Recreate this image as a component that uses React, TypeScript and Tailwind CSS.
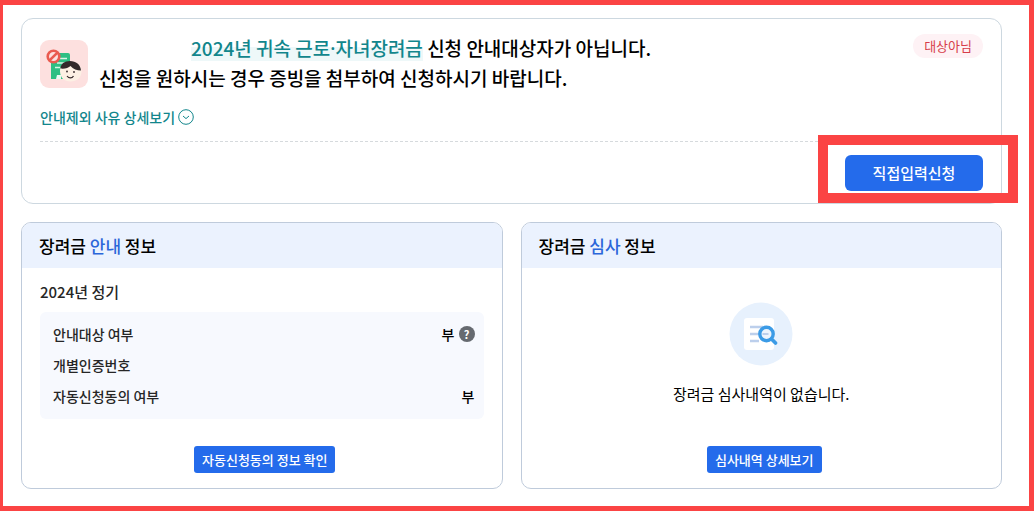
import type { ReactNode } from "react"

function NotEligibleIcon() {
  return (
    <svg className="size-12 shrink-0" viewBox="0 0 48 48" aria-hidden="true">
      <rect width="48" height="48" rx="9" fill="#fde0df" />
      <path d="M13 13h15a2 2 0 0 1 2 2v24H11V15a2 2 0 0 1 2-2z" fill="#2ebf83" />
      <path d="M20 18.500h7M17 23h8M15 27.500h5" stroke="#d8f5e6" strokeWidth="1.600" />
      <path d="M16 39l1-4h4v4z" fill="#e9fbf2" />
      <path d="M20 31c0-6 4-9 10-9s11.500 3 11.500 9c0 7-5 10.500-11 10.500S20 38 20 31z" fill="#fdf0e4" />
      <path d="M20.500 28.500c0-4.500 4-7.500 9.500-7.500 6 0 10.500 3.500 11 9.500-4 0-8-1.500-10.500-4.500-2 2-6 3-10 2.500z" fill="#33282a" />
      <circle cx="27" cy="31.500" r="0.900" fill="#33282a" />
      <circle cx="34" cy="32" r="0.900" fill="#33282a" />
      <path d="M27 36c2 2.600 5 2.600 6.500 0" fill="none" stroke="#33282a" strokeWidth="1.200" />
      <circle cx="13.500" cy="16.500" r="5.800" fill="#fde0df" stroke="#ea5b50" strokeWidth="2.600" />
      <path d="M9.800 20.200l7.400-7.400" stroke="#ea5b50" strokeWidth="2.600" />
    </svg>
  )
}

function EmptyIcon() {
  return (
    <svg className="size-16" viewBox="0 0 64 64" aria-hidden="true">
      <circle cx="32" cy="32" r="31.500" fill="#e7f1fd" />
      <rect x="15" y="16" width="30" height="32" rx="3" fill="#ffffff" />
      <path d="M21 25h13M21 32h10M21 39h9" stroke="#bccfec" strokeWidth="2.400" />
      <circle cx="37.500" cy="32" r="6.700" fill="#edf4fd" stroke="#3b9be6" strokeWidth="3.400" />
      <path d="M33.500 32h6" stroke="#bccfec" strokeWidth="2" />
      <path d="M42.500 37l4 4" stroke="#3b9be6" strokeWidth="3.800" strokeLinecap="round" />
    </svg>
  )
}

function ChevronCircle() {
  return (
    <svg className="size-4" viewBox="0 0 16 16" fill="none" stroke="currentColor" aria-hidden="true">
      <circle cx="8" cy="8" r="7.300" />
      <path d="M5 7l3 2.600L11 7" />
    </svg>
  )
}

function Panel({ keyword, children }: { keyword: string; children: ReactNode }) {
  return (
    <section className="flex flex-1 flex-col overflow-hidden rounded-[10px] border border-[#bfcbdb]">
      <h2 className="bg-[#ebf2fe] px-[17px] py-[10px] text-[17px] leading-[25px] font-medium">
        장려금 <span className="text-[#2b66d9]">{keyword}</span> 정보
      </h2>
      {children}
    </section>
  )
}

function SmallButton({ children }: { children: ReactNode }) {
  return (
    <button type="button" className="h-[27px] rounded-[3px] bg-[#246beb] px-2 text-[13px] font-medium text-white">
      {children}
    </button>
  )
}

function InfoRow({ label, children }: { label: string; children?: ReactNode }) {
  return (
    <div className="flex items-center justify-between">
      <dt className="text-[#262626]">{label}</dt>
      <dd className="flex items-center gap-1">{children}</dd>
    </div>
  )
}

export default function App() {
  return (
    <main className="flex min-h-screen flex-col gap-[18px] border-5 border-l-3 border-[#fb4444] bg-white pt-[13px] pr-[27px] pb-[17px] pl-[18px] font-['Noto_Sans_CJK_KR','Noto_Sans',sans-serif] text-black">
      <section className="rounded-[12px] border border-[#cdd8e0] px-[18px] pb-3">
        <div className="flex items-start pt-[14px]">
          <div className="pt-[7px]">
            <NotEligibleIcon />
          </div>
          <h1 className="flex-1 pl-[11px] text-[19px] leading-[30px] font-medium">
            <span className="block pl-[92px]">
              <mark className="bg-transparent bg-linear-to-b from-transparent from-50% to-[#eef8f9] to-50% text-[#12868c]">
                2024년 귀속 근로<span className="font-['Noto_Sans',sans-serif] leading-none">·</span>자녀장려금
              </mark>{" "}
              신청 안내대상자가 아닙니다.
            </span>
            신청을 원하시는 경우 증빙을 첨부하여 신청하시기 바랍니다.
          </h1>
          <span className="mt-[1px] rounded-full bg-[#fef2f5] px-[11px] text-[13px] leading-6 text-[#d63d4a]">대상아님</span>
        </div>
        <button type="button" className="mt-[14px] flex items-center gap-[3px] text-[14px] leading-5 font-medium text-[#12868c]">
          안내제외 사유 상세보기
          <ChevronCircle />
        </button>
        <div className="mt-[14px] flex justify-end border-t border-dashed border-[#d6dadd] pt-[13px]">
          <div className="relative">
            <button type="button" className="h-9 w-[138px] rounded-[6px] bg-[#246beb] text-[15px] font-medium text-white">
              직접입력신청
            </button>
            <span className="pointer-events-none absolute -top-5 -right-[35px] -bottom-3 -left-[27px] border-10 border-[#fb4444]" />
          </div>
        </div>
      </section>

      <div className="flex flex-1 gap-[18px]">
        <Panel keyword="안내">
          <div className="flex flex-1 flex-col px-[18px] pt-[14px] pb-[15px]">
            <h3 className="text-[15px] leading-5 font-medium text-[#262626]">2024년 정기</h3>
            <dl className="mt-[10px] flex flex-col gap-[11px] rounded-[6px] bg-[#f7f9fe] pt-3 pr-[9px] pb-[13px] pl-[13px] text-[14px] leading-5 font-medium">
              <InfoRow label="안내대상 여부">
                부
                <button type="button" aria-label="도움말" className="size-4 rounded-full bg-[#666a70] text-[11px] leading-4 font-bold text-white">
                  ?
                </button>
              </InfoRow>
              <InfoRow label="개별인증번호" />
              <InfoRow label="자동신청동의 여부">부</InfoRow>
            </dl>
            <div className="mt-auto flex justify-center pl-[6px]">
              <SmallButton>자동신청동의 정보 확인</SmallButton>
            </div>
          </div>
        </Panel>

        <Panel keyword="심사">
          <div className="flex flex-1 flex-col items-center pt-[34px] pb-[15px]">
            <EmptyIcon />
            <p className="mt-4 text-[15px] leading-6">장려금 심사내역이 없습니다.</p>
            <div className="mt-auto pl-[6px]">
              <SmallButton>심사내역 상세보기</SmallButton>
            </div>
          </div>
        </Panel>
      </div>
    </main>
  )
}
